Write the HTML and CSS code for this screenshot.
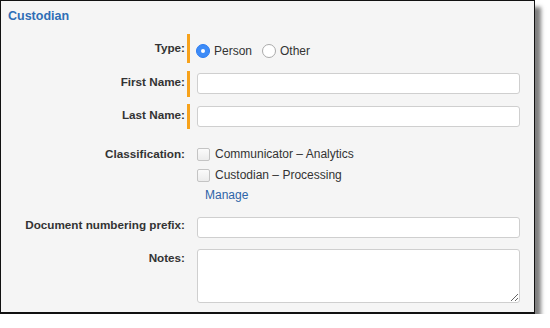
FILE: index.html
```html
<!DOCTYPE html>
<html lang="en">
<head>
    <meta charset="UTF-8">
    <meta name="viewport" content="width=device-width, initial-scale=1.0">
    <title>Custodian</title>
    <link rel="stylesheet" href="styles.css">
</head>
<body>
    <div class="panel">
        <h2 class="heading">Custodian</h2>

        <div class="form">
            <div class="row row-type">
                <div class="label">Type:</div>
                <div class="bar required"></div>
                <div class="field radios">
                    <label class="radio-opt"><span class="radio checked"></span>Person</label>
                    <label class="radio-opt"><span class="radio"></span>Other</label>
                </div>
            </div>

            <div class="row row-first">
                <div class="label">First Name:</div>
                <div class="bar required"></div>
                <div class="field"><input type="text" class="text-input"></div>
            </div>

            <div class="row row-last">
                <div class="label">Last Name:</div>
                <div class="bar required"></div>
                <div class="field"><input type="text" class="text-input"></div>
            </div>

            <div class="row row-class">
                <div class="label">Classification:</div>
                <div class="bar"></div>
                <div class="field">
                    <label class="check-opt"><span class="checkbox"></span>Communicator – Analytics</label>
                    <label class="check-opt"><span class="checkbox"></span>Custodian – Processing</label>
                    <a class="manage" href="#">Manage</a>
                </div>
            </div>

            <div class="row row-prefix">
                <div class="label">Document numbering prefix:</div>
                <div class="bar"></div>
                <div class="field"><input type="text" class="text-input"></div>
            </div>

            <div class="row row-notes">
                <div class="label">Notes:</div>
                <div class="bar"></div>
                <div class="field"><textarea class="notes"></textarea></div>
            </div>
        </div>
    </div>
</body>
</html>
```

FILE: styles.css
```css
body {
    margin: 0;
    background: #fff;
    font-family: "Liberation Sans", Arial, sans-serif;
    font-size: 12px;
    color: #333;
}
.panel {
    box-sizing: border-box;
    width: 535px;
    height: 314px;
    border: 1px solid #111;
    border-bottom-width: 2px;
    background-color: #f5f5f5;
    box-shadow: 6px 7px 4px rgba(0, 0, 0, 0.5);
}
.heading {
    margin: 0;
    padding: 7px 7px 0;
    height: 26px;
    font-size: 12.5px;
    line-height: 16px;
    font-weight: bold;
    color: #2f6eb6;
}
.form {
    display: flex;
    flex-direction: column;
}
.row {
    display: flex;
    align-items: stretch;
}
.label {
    width: 184px;
    flex-shrink: 0;
    text-align: right;
    font-size: 11.7px;
    font-weight: bold;
    line-height: 14px;
    color: #333;
}
.bar {
    width: 3px;
    margin-left: 2px;
    flex-shrink: 0;
}
.bar.required {
    background-color: #f7a21b;
}
.field {
    margin-left: 7px;
    display: flex;
    flex-direction: column;
}
.row-type {
    height: 29px;
}
.row-type .label {
    padding-top: 7px;
}
.radios {
    flex-direction: row;
    align-items: center;
    gap: 10px;
    padding-top: 4px;
    margin-left: 6px;
}
.radio-opt {
    display: flex;
    align-items: center;
    gap: 4px;
    line-height: 14px;
    font-size: 12px;
    color: #333;
}
.radio {
    box-sizing: border-box;
    width: 14px;
    height: 14px;
    border-radius: 50%;
    border: 1px solid #aaa;
    background: #fff;
    position: relative;
}
.radio.checked {
    border-color: #2b7cf2;
    background: #3d8bf7;
}
.radio.checked::after {
    content: "";
    position: absolute;
    left: 4px;
    top: 4px;
    width: 4px;
    height: 4px;
    border-radius: 50%;
    background: #fff;
}
.row-first {
    margin-top: 8px;
    height: 26px;
}
.row-first .label {
    padding-top: 4px;
}
.row-last {
    margin-top: 7px;
    height: 25px;
}
.row-last .label {
    padding-top: 4px;
}
.text-input {
    box-sizing: border-box;
    width: 323px;
    height: 21px;
    margin: 2px 0 0;
    padding: 2px 5px;
    border: 1px solid #cfcfcf;
    border-radius: 3px;
    background: #fff;
    font: inherit;
    outline: none;
}
.row-class {
    margin-top: 17px;
}
.row-class .label {
    padding-top: 1px;
}
.check-opt {
    display: flex;
    align-items: center;
    gap: 5px;
    height: 16px;
    margin-bottom: 5px;
    font-size: 12px;
    color: #333;
}
.checkbox {
    box-sizing: border-box;
    width: 13px;
    height: 13px;
    border: 1px solid #c4c4c4;
    border-radius: 2px;
    background: linear-gradient(#fbfbfb, #ececec);
}
.manage {
    display: block;
    margin-left: 8px;
    line-height: 14px;
    font-size: 12px;
    color: #2d64a8;
    text-decoration: none;
}
.row-prefix {
    margin-top: 13px;
}
.row-prefix .label {
    padding-top: 3px;
}
.row-notes {
    margin-top: 11px;
}
.row-notes .label {
    padding-top: 2px;
}
.notes {
    box-sizing: border-box;
    width: 323px;
    height: 54px;
    border: 1px solid #cfcfcf;
    border-radius: 3px;
    background: #fff;
    resize: vertical;
    font: inherit;
    outline: none;
}
```
